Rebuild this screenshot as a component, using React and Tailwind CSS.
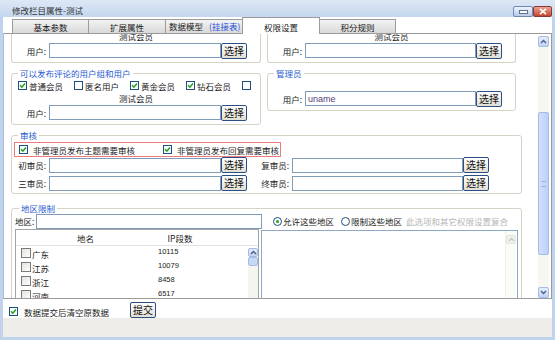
import React from 'react';

const Check = ({ on }) => (
  <span className="w-[9px] h-[9px] shrink-0 border border-[#1c4f82] bg-white flex items-center justify-center">
    {on && (
      <svg width="7" height="7" viewBox="0 0 7 7">
        <path d="M1 3.3 L2.8 5.2 L6 1.4" stroke="#1e9e1e" strokeWidth="1.5" fill="none" />
      </svg>
    )}
  </span>
);

const Radio = ({ on }) => (
  <span className="w-[9px] h-[9px] shrink-0 rounded-full border border-[#1c4f82] bg-white flex items-center justify-center">
    {on && <span className="w-[3px] h-[3px] rounded-full bg-[#1ea51e]" />}
  </span>
);

const Btn = ({ children, className = '' }) => (
  <button className={`h-[16px] w-[26px] shrink-0 rounded-[2px] border border-[#2b4f84] bg-gradient-to-b from-white to-[#e2dfd3] text-[10px] leading-none text-[#111] flex items-center justify-center ${className}`}>
    {children}
  </button>
);

const Input = ({ w, value }) => (
  <div className={`${w} h-[15px] shrink-0 border border-[#7f9db9] bg-white flex items-center px-[2px] font-['Liberation_Sans',sans-serif] text-[9px] text-[#55407e]`}>
    {value}
  </div>
);

const Field = ({ label, w = 'w-[172px]', labelW = 'w-[35px]', value }) => (
  <div className="flex items-center">
    <span className={`${labelW} shrink-0 text-right pr-[3px]`}>{label}</span>
    <Input w={w} value={value} />
    <Btn>选择</Btn>
  </div>
);

const Box = ({ title, className = '', children }) => (
  <fieldset className={`border border-[#d5d3c6] rounded-[3px] px-[2px] ${className}`}>
    <legend className="ml-[4px] px-[2px] leading-[12px] text-[#1f5bd0]">{title}</legend>
    {children}
  </fieldset>
);

const Arrow = ({ up, faded, size = 'w-[11px] h-[11px]' }) => (
  <div className={`${size} shrink-0 rounded-[2px] border flex items-center justify-center ${faded ? 'border-[#e6e6df] bg-[#f2f2ed]' : 'border-[#a5bce6] bg-gradient-to-b from-[#e4edfc] to-[#c3d4f5]'}`}>
    <svg width="7" height="5" viewBox="0 0 7 5">
      <path d={up ? 'M1 4 L3.5 1.5 L6 4' : 'M1 1 L3.5 3.5 L6 1'} stroke={faded ? '#c6c6be' : '#4a5e86'} strokeWidth="1.4" fill="none" />
    </svg>
  </div>
);

// scrolled-off top row: only its lower part is still in view
const TailBox = ({ right }) => (
  <div className={`${right ? 'w-[249px]' : 'w-[250px]'} border border-t-0 border-[#d5d3c6] rounded-b-[3px] px-[2px]`}>
    <div className="h-[12px] text-center">测试会员</div>
    <div className="h-[17px] flex items-center">
      <Field label="用户:" w={right ? 'w-[171px]' : 'w-[172px]'} />
    </div>
    <div className="h-[3px]" />
  </div>
);

const regions = [
  ['广东', '10115'],
  ['江苏', '10079'],
  ['浙江', '8458'],
  ['河南', '6517'],
];

const tabs = ['基本参数', '扩展属性'];

export default function App() {
  return (
    <div className="w-[555px] h-[340px] overflow-hidden bg-[#bfd3ec] flex flex-col font-['Noto_Sans_CJK_SC',sans-serif] text-[8.5px] leading-[12px] text-[#1a1a1a]">
      {/* title bar */}
      <div className="h-[17px] shrink-0 flex items-start bg-gradient-to-b from-[#dde8f5] to-[#c4d7ee] pl-[12px] pr-[3px]">
        <span className="mt-[4px] text-[#333]">修改栏目属性-测试</span>
        <div className="ml-auto mt-[6px] flex">
          <div className="w-[20px] h-[11px] rounded-[2px] border border-[#6f89b3] bg-gradient-to-b from-[#eef3fb] to-[#b7cbe9] flex items-center justify-center">
            <span className="w-[7px] h-[2px] bg-white border border-[#5c729a] box-content" />
          </div>
          <div className="w-[19px] h-[11px] rounded-[2px] border border-[#8a3a34] bg-gradient-to-b from-[#e9a394] to-[#c2432f] flex items-center justify-center">
            <svg width="8" height="7" viewBox="0 0 8 7">
              <path d="M1 0.8 L7 6.2 M7 0.8 L1 6.2" stroke="white" strokeWidth="1.7" />
            </svg>
          </div>
        </div>
      </div>

      {/* body */}
      <div className="mx-[3px] w-[549px] flex-1 bg-white flex flex-col">
        {/* tabs */}
        <div className="h-[16px] shrink-0 flex items-end pl-[9px]">
          {tabs.map((t, i) => (
            <div key={t} className={`h-[14px] ${i === 0 ? 'w-[76px]' : 'w-[77px]'} border-l border-t border-[#9b9b9b] bg-gradient-to-b from-[#f3f3f3] to-[#d9d9d9] flex items-center justify-center`}>
              {t}
            </div>
          ))}
          <div className="h-[14px] w-[77px] border-l border-t border-[#9b9b9b] bg-gradient-to-b from-[#f3f3f3] to-[#d9d9d9] flex items-end pb-[1px] pl-[3px] gap-[6px]">
            <span>数据模型</span>
            <span className="text-[#1f4fd8]">(挂接表)</span>
          </div>
          <div className="relative z-10 -mb-px h-[17px] w-[78px] border-x border-t border-[#9b9b9b] bg-white flex items-center justify-center pt-[2px]">
            权限设置
          </div>
          <div className="h-[14px] w-[76px] border-r border-t border-[#9b9b9b] bg-gradient-to-b from-[#f3f3f3] to-[#d9d9d9] flex items-center justify-center">
            积分规则
          </div>
        </div>

        {/* panel */}
        <div className="h-[266px] shrink-0 border border-[#9b9b9b] border-l-[#a9bfdf] flex">
          <div className="flex-1 overflow-hidden">
            <div className="-mt-[4px] pl-[7px] flex flex-col">
              {/* row 1 */}
              <div className="flex items-start gap-[6px]">
                <TailBox />
                <TailBox right />
              </div>

              {/* row 2 */}
              <div className="mt-[4px] flex items-start gap-[6px]">
                <Box title="可以发布评论的用户组和用户" className="w-[250px]">
                  <div className="h-[13px] flex items-center gap-[11px] pl-[4px]">
                    {[['普通会员', true], ['匿名用户', false], ['黄金会员', true], ['钻石会员', true]].map(([t, on]) => (
                      <span key={t} className="flex items-center gap-[2px]">
                        <Check on={on} />
                        <span className="w-[34px]">{t}</span>
                      </span>
                    ))}
                    <Check on={false} />
                  </div>
                  <div className="h-[12px] text-center">测试会员</div>
                  <div className="h-[17px] flex items-center">
                    <Field label="用户:" />
                  </div>
                  <div className="h-[3px]" />
                </Box>
                <Box title="管理员" className="w-[249px]">
                  <div className="mt-[11px] h-[17px] flex items-center">
                    <Field label="用户:" w="w-[171px]" value="uname" />
                  </div>
                  <div className="h-[3px]" />
                </Box>
              </div>

              {/* audit */}
              <Box title="审核" className="mt-[4px] w-[511px]">
                <div className="mt-px h-[15px] w-[267px] border border-[#ee7b7b] flex items-center pl-[4px]">
                  <Check on />
                  <span className="ml-[5px]">非管理员发布主题需要审核</span>
                  <span className="ml-[28px]"><Check on /></span>
                  <span className="ml-[5px]">非管理员发布回复需要审核</span>
                </div>
                <div className="h-[16px] flex items-center">
                  <Field label="初审员:" />
                  <Field label="复审员:" labelW="w-[45px]" w="w-[171px]" />
                </div>
                <div className="mt-[2px] h-[16px] flex items-center">
                  <Field label="三审员:" />
                  <Field label="终审员:" labelW="w-[45px]" w="w-[171px]" />
                </div>
                <div className="h-[2px]" />
              </Box>

              {/* region */}
              <Box title="地区限制" className="mt-[8px] w-[511px] !px-[3px]">
                <div className="-mt-px h-[16px] flex items-center">
                  <span className="w-[21px] shrink-0">地区:</span>
                  <Input w="w-[226px]" />
                  <div className="ml-[11px] flex items-center">
                    <Radio on />
                    <span className="ml-[1px]">允许这些地区</span>
                    <span className="ml-[7px]"><Radio /></span>
                    <span className="ml-[1px]">限制这些地区</span>
                    <span className="ml-[4px] text-[#b5b5b5]">此选项和其它权限设置复合</span>
                  </div>
                </div>
                <div className="flex items-start">
                  <div className="w-[244px] h-[72px] border border-[#a3a3a3] bg-white flex flex-col">
                    <div className="h-[16px] shrink-0 border-b border-[#e3e3e3] flex items-center">
                      <span className="w-[139px] text-center">地名</span>
                      <span className="w-[50px] text-center">IP段数</span>
                    </div>
                    <div className="flex flex-1">
                      <div className="flex-1 flex flex-col">
                        {regions.map(([n, c]) => (
                          <div key={n} className="h-[14px] flex items-center">
                            <span className="w-[139px] flex items-center pl-[5px]">
                              <span className="w-[10px] h-[10px] border border-[#7b7b7b] bg-gradient-to-br from-[#e2e2dc] to-white" />
                              <span className="ml-[1px] mt-[2px]">{n}</span>
                            </span>
                            <span className="pl-[3px] -mt-[2px] font-['Liberation_Sans',sans-serif] text-[7.5px]">{c}</span>
                          </div>
                        ))}
                      </div>
                      <div className="w-[10px] flex flex-col pt-[2px]">
                        <Arrow up size="w-[10px] h-[9px]" />
                        <div className="h-[9px] rounded-[2px] border border-[#a5bce6] bg-[#c7d7f6]" />
                        <div className="flex-1 bg-[#f4f4f0]" />
                      </div>
                    </div>
                  </div>
                  <div className="ml-[2px] mt-px w-[257px] h-[72px] border border-[#8ea7c6] bg-white flex justify-end pr-px">
                    <div className="w-[11px] flex flex-col pt-[4px] bg-[#fbfbf7] border-l border-[#f0f0ea]">
                      <Arrow up faded size="w-[10px] h-[9px]" />
                    </div>
                  </div>
                </div>
              </Box>
            </div>
          </div>

          {/* scrollbar */}
          <div className="w-[11px] mr-[2px] mt-[2px] flex flex-col bg-[#f6f6f3]">
            <Arrow up />
            <div className="h-[240px] flex flex-col">
              <div className="h-[65px]" />
              <div className="h-[143px] rounded-[2px] border border-[#a3bbe7] bg-gradient-to-r from-[#d3e0fa] to-[#bcd0f6] flex items-center justify-center">
                <span className="w-[5px] h-[6px] border-y border-[#9fb4dd]" />
              </div>
              <div className="flex-1" />
            </div>
            <Arrow />
          </div>
        </div>

        {/* bottom bar */}
        <div className="h-[19px] shrink-0 flex items-start pl-[6px]">
          <span className="mt-[8px]"><Check on /></span>
          <span className="ml-[6px] mt-[7px]">数据提交后清空原数据</span>
          <Btn className="ml-[21px] mt-[3px]">提交</Btn>
        </div>
        <div className="flex-1 bg-[#efedea]" />
      </div>
      <div className="h-[3px] shrink-0" />
    </div>
  );
}
